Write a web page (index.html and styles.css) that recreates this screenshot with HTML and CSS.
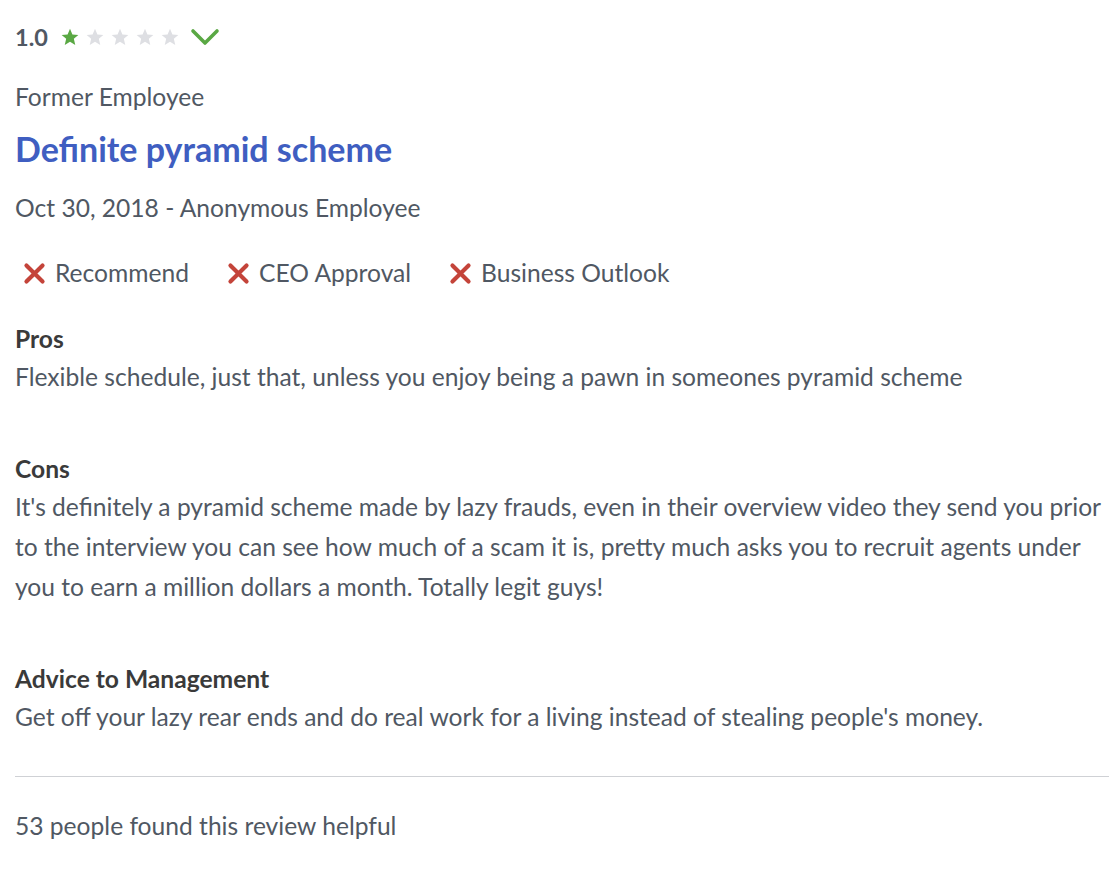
FILE: index.html
```html
<!DOCTYPE html>
<html>
<head>
<meta charset="utf-8">
<link rel="stylesheet" href="styles.css">
</head>
<body>
<div class="review">
  <div class="rating-row">
    <span class="rating">1.0</span>
    <span class="stars">
      <svg class="star on" viewBox="0 0 24 24"><path d="M12 2l2.9 6.9 7.1.6-5.4 4.7 1.7 7.3L12 17.6 5.7 21.5l1.7-7.3L2 9.5l7.1-.6z"/></svg>
      <svg class="star" viewBox="0 0 24 24"><path d="M12 2l2.9 6.9 7.1.6-5.4 4.7 1.7 7.3L12 17.6 5.7 21.5l1.7-7.3L2 9.5l7.1-.6z"/></svg>
      <svg class="star" viewBox="0 0 24 24"><path d="M12 2l2.9 6.9 7.1.6-5.4 4.7 1.7 7.3L12 17.6 5.7 21.5l1.7-7.3L2 9.5l7.1-.6z"/></svg>
      <svg class="star" viewBox="0 0 24 24"><path d="M12 2l2.9 6.9 7.1.6-5.4 4.7 1.7 7.3L12 17.6 5.7 21.5l1.7-7.3L2 9.5l7.1-.6z"/></svg>
      <svg class="star" viewBox="0 0 24 24"><path d="M12 2l2.9 6.9 7.1.6-5.4 4.7 1.7 7.3L12 17.6 5.7 21.5l1.7-7.3L2 9.5l7.1-.6z"/></svg>
    </span>
    <svg class="chevron" viewBox="0 0 30 20"><path d="M3 4l12 12L27 4" fill="none" stroke-width="3.6" stroke-linecap="round" stroke-linejoin="round"/></svg>
  </div>
  <div class="status">Former Employee</div>
  <h2 class="title">Definite pyramid scheme</h2>
  <div class="meta">Oct 30, 2018 - Anonymous Employee</div>
  <div class="flags">
    <span class="flag"><svg class="x" viewBox="0 0 20 20"><path d="M3 3l14 14M17 3L3 17" stroke-width="3.6" stroke-linecap="round"/></svg>Recommend</span>
    <span class="flag"><svg class="x" viewBox="0 0 20 20"><path d="M3 3l14 14M17 3L3 17" stroke-width="3.6" stroke-linecap="round"/></svg>CEO Approval</span>
    <span class="flag"><svg class="x" viewBox="0 0 20 20"><path d="M3 3l14 14M17 3L3 17" stroke-width="3.6" stroke-linecap="round"/></svg>Business Outlook</span>
  </div>
  <div class="section">
    <h3 class="sec-title">Pros</h3>
    <p class="sec-text">Flexible schedule, just that, unless you enjoy being a pawn in someones pyramid scheme</p>
  </div>
  <div class="section">
    <h3 class="sec-title">Cons</h3>
    <p class="sec-text">It's definitely a pyramid scheme made by lazy frauds, even in their overview video they send you prior to the interview you can see how much of a scam it is, pretty much asks you to recruit agents under you to earn a million dollars a month. Totally legit guys!</p>
  </div>
  <div class="section">
    <h3 class="sec-title">Advice to Management</h3>
    <p class="sec-text">Get off your lazy rear ends and do real work for a living instead of stealing people's money.</p>
  </div>
  <div class="footer">53 people found this review helpful</div>
</div>
</body>
</html>
```
FILE: styles.css
```css
html, body {
  margin: 0;
  padding: 0;
  background: #fff;
}
body {
  font-family: Lato, "Open Sans", sans-serif;
  color: #505863;
  font-size: 24.6px;
}
.review {
  padding: 18px 4px 0 15px;
}
.rating-row {
  display: flex;
  align-items: center;
  height: 38px;
}
.rating {
  font-weight: 700;
  font-size: 23.5px;
  color: #505863;
  margin-right: 12px;
}
.stars {
  display: flex;
  gap: 5px;
}
.star {
  width: 20px;
  height: 20px;
  fill: #dedfe3;
}
.star.on {
  fill: #5aa844;
}
.chevron {
  width: 30px;
  height: 20px;
  margin-left: 10px;
  stroke: #5aa844;
}
.status {
  margin-top: 28px;
  line-height: 26px;
}
.title {
  margin: 19px 0 0;
  font-size: 34px;
  font-weight: 700;
  color: #3f5ec1;
  line-height: 40px;
}
.meta {
  margin-top: 26px;
  line-height: 26px;
}
.flags {
  display: flex;
  gap: 38px;
  margin-top: 39px;
  padding-left: 8px;
  line-height: 26px;
}
.flag {
  display: flex;
  align-items: center;
}
.x {
  width: 23px;
  height: 23px;
  stroke: #c4443a;
  margin-right: 9px;
}
.section {
  margin-top: 40px;
}
.section + .section {
  margin-top: 59px;
}
.sec-title {
  margin: 0;
  font-size: 24.6px;
  font-weight: 700;
  color: #3a3a3a;
  line-height: 26px;
}
.sec-text {
  margin: 5px 0 0;
  line-height: 40px;
}
.footer {
  border-top: 1px solid #cfd1d5;
  margin-top: 39px;
  padding-top: 36px;
  line-height: 26px;
}
```
